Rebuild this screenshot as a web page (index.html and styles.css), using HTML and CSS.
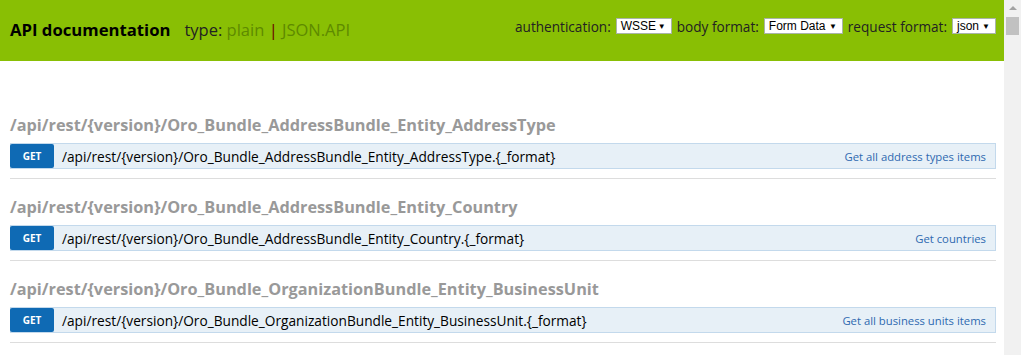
FILE: index.html
```html
<!DOCTYPE html>
<html>
<head>
<meta charset="utf-8">
<title>API documentation</title>
<link rel="stylesheet" href="styles.css">
</head>
<body>
<div class="page">
<header class="header">
  <div class="brand">
    <h1 class="title">API documentation</h1>
    <div class="type">type: <span class="type-opt">plain</span> <span class="sep">|</span> <span class="type-opt">JSON.API</span></div>
  </div>
  <form class="options">
    <label class="opt">authentication:</label>
    <span class="sel sel-auth">WSSE <i class="caret">▼</i></span>
    <label class="opt">body format:</label>
    <span class="sel sel-body">Form Data <i class="caret">▼</i></span>
    <label class="opt">request format:</label>
    <span class="sel sel-req">json <i class="caret">▼</i></span>
  </form>
</header>
<main class="content">
  <section class="resource">
    <h2 class="res-title">/api/rest/{version}/Oro_Bundle_AddressBundle_Entity_AddressType</h2>
    <div class="op">
      <span class="method">GET</span>
      <span class="path">/api/rest/{version}/Oro_Bundle_AddressBundle_Entity_AddressType.{_format}</span>
      <span class="desc">Get all address types items</span>
    </div>
  </section>
  <section class="resource">
    <h2 class="res-title">/api/rest/{version}/Oro_Bundle_AddressBundle_Entity_Country</h2>
    <div class="op">
      <span class="method">GET</span>
      <span class="path">/api/rest/{version}/Oro_Bundle_AddressBundle_Entity_Country.{_format}</span>
      <span class="desc">Get countries</span>
    </div>
  </section>
  <section class="resource">
    <h2 class="res-title">/api/rest/{version}/Oro_Bundle_OrganizationBundle_Entity_BusinessUnit</h2>
    <div class="op">
      <span class="method">GET</span>
      <span class="path">/api/rest/{version}/Oro_Bundle_OrganizationBundle_Entity_BusinessUnit.{_format}</span>
      <span class="desc">Get all business units items</span>
    </div>
  </section>
</main>
</div>
<div class="scrollbar" aria-hidden="true">
  <div class="sb-arrow"></div>
  <div class="sb-thumb"></div>
</div>
</body>
</html>
```
FILE: styles.css
```css
html, body {
  margin: 0;
  padding: 0;
}
body {
  font-family: "Open Sans", "Noto Sans", sans-serif;
  background: #fff;
  color: #000;
  overflow: hidden;
}
.page {
  width: 1004px;
}
.header {
  background: #89bf04;
  height: 61px;
  display: flex;
  align-items: center;
  justify-content: space-between;
  padding: 0 8px 0 10px;
}
.brand {
  display: flex;
  align-items: baseline;
  margin-top: -2px;
  white-space: nowrap;
}
.title {
  margin: 0;
  font-size: 16.7px;
  font-weight: 700;
  color: #000;
}
.type {
  margin-left: 14px;
  font-size: 16.5px;
  color: #222;
}
.type-opt {
  color: #5e8a00;
}
.sep {
  color: #6b0000;
}
.options {
  display: flex;
  align-items: center;
  gap: 5px;
  margin: -9px 0 0 0;
  font-size: 13.6px;
  color: #222;
  white-space: nowrap;
}
.sel {
  box-sizing: border-box;
  flex-shrink: 0;
  display: inline-flex;
  align-items: center;
  justify-content: space-between;
  height: 16px;
  padding: 0 5px 0 4px;
  background: #fff;
  border: 1px solid #a9b4a9;
  font-family: "Liberation Sans", Arial, sans-serif;
  font-size: 12px;
  color: #000;
  white-space: nowrap;
}
.sel-auth { width: 56px; }
.sel-body { width: 79px; }
.sel-req { width: 44px; }
.caret {
  font-style: normal;
  font-size: 8px;
}
.content {
  padding: 52px 8px 0 10px;
}
.resource {
  border-bottom: 1px solid #ddd;
  padding-bottom: 9px;
  margin-bottom: 16px;
}
.res-title {
  margin: 0 0 6px 0;
  font-size: 16.3px;
  font-weight: 700;
  color: #999;
  line-height: 24px;
  white-space: nowrap;
}
.op {
  display: flex;
  align-items: center;
  height: 24px;
  background: #e7f0f7;
  border: 1px solid #c3d9ec;
  white-space: nowrap;
}
.method {
  width: 44px;
  height: 24px;
  margin: -1px 0 -1px -1px;
  background: #0f6ab4;
  color: #fff;
  border-radius: 2px;
  font-size: 10px;
  font-weight: 700;
  display: flex;
  align-items: center;
  justify-content: center;
}
.path {
  margin-left: 8px;
  font-size: 13.7px;
  color: #000;
  flex: 1;
}
.desc {
  font-size: 11.3px;
  color: #2e69b0;
  margin-right: 9px;
}
.scrollbar {
  position: fixed;
  top: 0;
  right: 0;
  width: 17px;
  height: 100%;
  background: #f1f1f1;
  display: flex;
  flex-direction: column;
  align-items: center;
}
.sb-arrow {
  margin-top: 6px;
  width: 0;
  height: 0;
  border-left: 4px solid transparent;
  border-right: 4px solid transparent;
  border-bottom: 4px solid #a3a3a3;
}
.sb-thumb {
  margin-top: 7px;
  width: 13px;
  height: 18px;
  background: #c1c1c1;
}
```
